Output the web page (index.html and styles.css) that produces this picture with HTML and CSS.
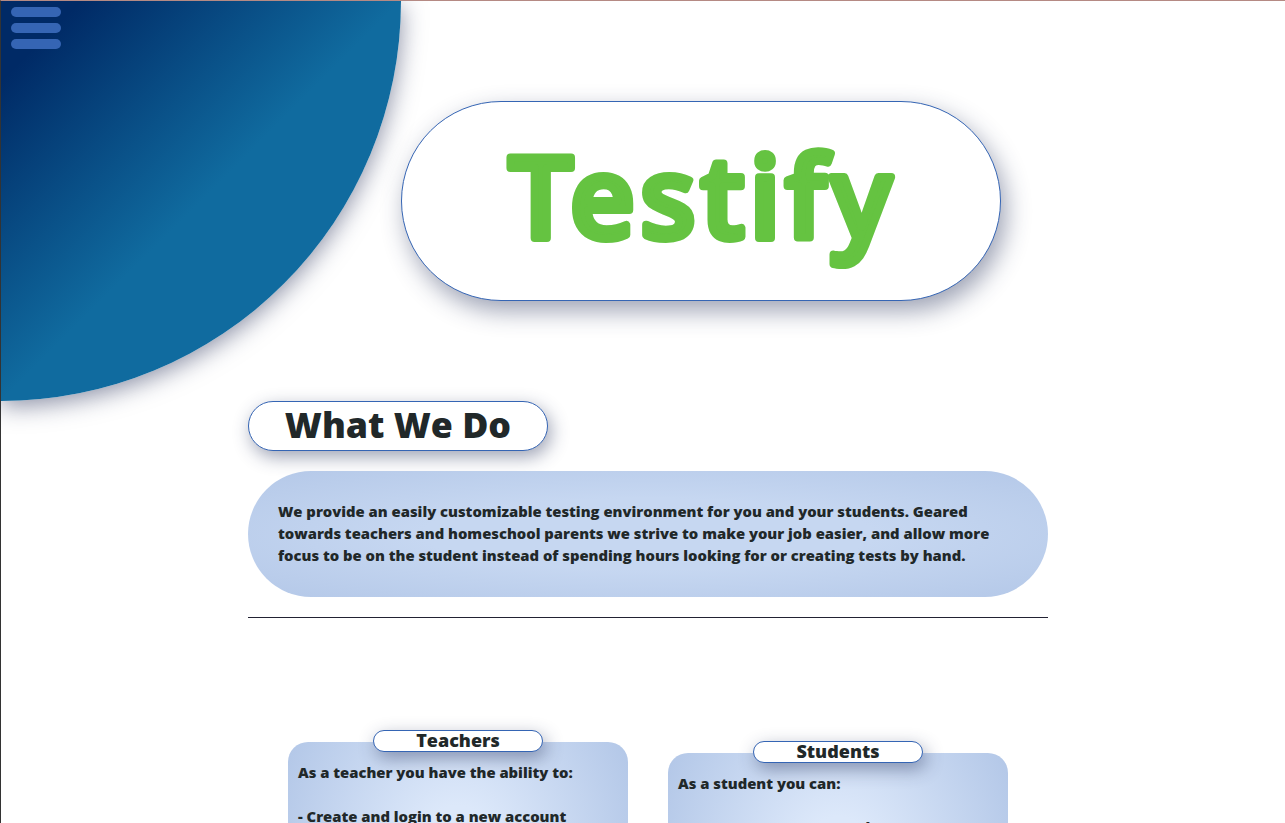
FILE: index.html
```html
<!DOCTYPE html>
<html lang="en">
<head>
    <meta charset="UTF-8">
    <meta name="viewport" content="width=device-width, initial-scale=1.0">
    <title>Testify</title>
    <link rel="stylesheet" href="styles.css">
</head>
<body>
    <div class="page">
        <div class="corner">
            <button class="menu-btn" aria-label="Menu">
                <span class="menu-bar"></span>
                <span class="menu-bar"></span>
                <span class="menu-bar"></span>
            </button>
        </div>

        <header class="hero">
            <svg class="logo" width="460" height="160" viewBox="0 0 460 160">
                <text class="logo-text" x="38" y="117">Testify</text>
            </svg>
        </header>

        <main class="content">
            <h2 class="section-title">What We Do</h2>
            <p class="about">We provide an easily customizable testing environment for you and your students. Geared towards teachers and homeschool parents we strive to make your job easier, and allow more focus to be on the student instead of spending hours looking for or creating tests by hand.</p>
            <hr class="divider">

            <div class="cards">
                <section class="card">
                    <h3 class="card-title">Teachers</h3>
                    <div class="card-body">
                        <p>As a teacher you have the ability to:</p>
                        <p>- Create and login to a new account</p>
                    </div>
                </section>
                <section class="card card-low">
                    <h3 class="card-title">Students</h3>
                    <div class="card-body">
                        <p>As a student you can:</p>
                        <p>- Create an account to take tests</p>
                    </div>
                </section>
            </div>
        </main>
    </div>
</body>
</html>
```

FILE: styles.css
```css
html, body {
    margin: 0;
    padding: 0;
    height: 100%;
    background: #fff;
    overflow: hidden;
}
body {
    font-family: "Open Sans", "Liberation Sans", sans-serif;
    font-weight: 800;
    color: #212829;
}
.page {
    position: relative;
    height: 100%;
    box-sizing: border-box;
    overflow: hidden;
    border-top: 1px solid #b58a84;
    border-left: 1px solid #333;
}

/* quarter circle in the corner */
.corner {
    position: absolute;
    top: 0;
    left: 0;
    width: 400px;
    height: 400px;
    border-radius: 0 0 100% 0;
    background: linear-gradient(135deg, #002a66 10%, #106b9f 50%);
    box-shadow: 0 5px 25px rgba(40, 50, 90, 0.55);
}
.menu-btn {
    display: flex;
    flex-direction: column;
    gap: 6px;
    margin: 6px 0 0 10px;
    padding: 0;
    border: none;
    background: none;
}
.menu-bar {
    display: block;
    width: 50px;
    height: 10px;
    border-radius: 5px;
    background: #3565b4;
}

.hero {
    display: flex;
    box-sizing: border-box;
    width: 600px;
    height: 200px;
    margin: 100px 0 0 400px;
    align-items: center;
    justify-content: center;
    background: #fff;
    border: 1px solid #3565b4;
    border-radius: 100px;
    box-shadow: 5px 10px 25px rgba(40, 50, 90, 0.45);
    position: relative;
}
.logo-text {
    font-family: "Noto Sans", "Open Sans", sans-serif;
    font-size: 113px;
    font-weight: 500;
    letter-spacing: 5.5px;
    fill: #65c341;
    stroke: #65c341;
    stroke-width: 8px;
    stroke-linejoin: round;
    stroke-linecap: round;
}

.content {
    width: 800px;
    margin: 100px 0 0 247px;
}
.section-title {
    box-sizing: border-box;
    width: 300px;
    height: 50px;
    margin: 0;
    text-align: center;
    font-size: 35.7px;
    font-weight: 800;
    line-height: 45px;
    background: #fff;
    border: 1px solid #3565b4;
    border-radius: 25px;
    box-shadow: 3px 6px 18px rgba(40, 50, 90, 0.45);
}
.about {
    box-sizing: border-box;
    height: 126px;
    margin: 20px 0 0;
    padding: 29px 30px;
    font-size: 14.8px;
    line-height: 22px;
    border-radius: 63px;
    background: radial-gradient(ellipse at center, #c6d7f1 40%, #b4c8e8 100%);
}
.divider {
    height: 1px;
    margin: 20px 0 0;
    border: none;
    background: #223;
}

.cards {
    display: flex;
    gap: 40px;
    margin: 112px 0 0 40px;
}
.card {
    position: relative;
    width: 340px;
    height: 300px;
    padding-top: 12px;
    box-sizing: content-box;
}
.card-low {
    margin-top: 11px;
}
.card-title {
    position: absolute;
    top: 0;
    left: 85px;
    box-sizing: border-box;
    width: 170px;
    height: 22px;
    margin: 0;
    text-align: center;
    font-size: 18px;
    font-weight: 800;
    line-height: 18px;
    background: #fff;
    border: 1px solid #3565b4;
    border-radius: 11px;
    box-shadow: 3px 6px 18px rgba(40, 50, 90, 0.45);
}
.card-body {
    box-sizing: border-box;
    height: 300px;
    padding: 19px 10px;
    font-size: 14.8px;
    line-height: 22px;
    border-radius: 20px;
    background: radial-gradient(ellipse at 50% 35%, #dce8fa 15%, #b4c8e8 78%);
}
.card-body p {
    margin: 0 0 22px;
}
```
